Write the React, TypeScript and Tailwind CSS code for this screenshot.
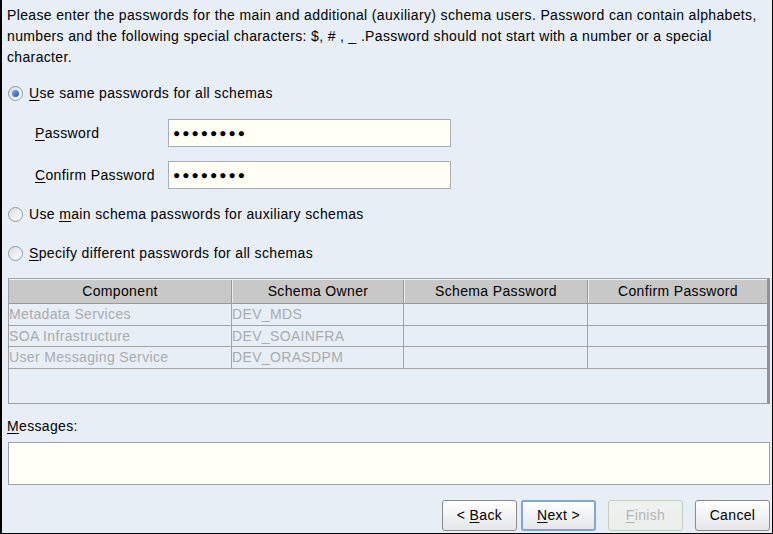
import React from "react";

const U = ({ children }: { children: React.ReactNode }) => <span className="underline underline-offset-2">{children}</span>;

function Radio({ checked }: { checked?: boolean }) {
  return (
    <span className="relative inline-flex items-center justify-center w-[15px] h-[15px] rounded-full border border-[#8e99a4] bg-gradient-to-br from-[#d9dde2] to-white shrink-0">
      {checked && <span className="w-[7px] h-[7px] rounded-full bg-gradient-to-br from-[#7fa6e8] to-[#2457b8]" />}
    </span>
  );
}

function Btn({ children, variant }: { children: React.ReactNode; variant?: "focus" | "disabled" }) {
  const base = "h-[31px] w-[75px] rounded-[3px] flex items-center justify-center bg-gradient-to-b";
  const cls =
    variant === "focus"
      ? "border-2 border-[#7ea6d8] text-black from-white to-[#e4e6ea]"
      : variant === "disabled"
      ? "border border-[#c4ccc4] text-[#b4b4b4] from-[#f0f2f0] to-[#eaeeea]"
      : "border border-[#8a8a8a] text-black from-white to-[#e4e6ea]";
  return (
    <div className={`${base} ${cls}`}>
      <span className="whitespace-pre">{children}</span>
    </div>
  );
}

export default function App() {
  const rows = [
    ["Metadata Services", "DEV_MDS"],
    ["SOA Infrastructure", "DEV_SOAINFRA"],
    ["User Messaging Service", "DEV_ORASDPM"],
  ];
  return (
    <div
      className="w-[773px] h-[534px] bg-[#e8eef6] border-l-2 border-r border-b border-black flex flex-col text-[14px] tracking-[0.35px] text-black overflow-hidden"
      style={{ fontFamily: '"Liberation Sans", Arial, sans-serif' }}
    >
      <div className="pl-[5px] pr-[2px] pt-[5px] leading-[21px]">
        Please enter the passwords for the main and additional (auxiliary) schema users. Password can contain alphabets, numbers and the following special characters: $, # , _ .Password should not start with a number or a special character.
      </div>

      <div className="flex items-center gap-[6px] mt-[15px] pl-[6px] h-[20px]">
        <Radio checked />
        <span><U>U</U>se same passwords for all schemas</span>
      </div>

      <div className="flex items-center mt-[16px] pl-[33px]">
        <span className="w-[133px]"><U>P</U>assword</span>
        <div className="w-[283px] h-[28px] bg-[#fffff5] border border-[#a7adb3] flex items-center pl-[4px] text-[12px] tracking-[2px]">●●●●●●●●</div>
      </div>
      <div className="flex items-center mt-[14px] pl-[33px]">
        <span className="w-[133px]"><U>C</U>onfirm Password</span>
        <div className="w-[283px] h-[28px] bg-[#fffff5] border border-[#a7adb3] flex items-center pl-[4px] text-[12px] tracking-[2px]">●●●●●●●●</div>
      </div>

      <div className="flex items-center gap-[6px] mt-[15px] pl-[6px] h-[20px]">
        <Radio />
        <span>Use <U>m</U>ain schema passwords for auxiliary schemas</span>
      </div>
      <div className="flex items-center gap-[6px] mt-[19px] pl-[6px] h-[20px]">
        <Radio />
        <span><U>S</U>pecify different passwords for all schemas</span>
      </div>

      <div className="ml-[6px] mr-[2px] mt-[15px] h-[126px] border border-[#9aa0a6] border-r-[3px] border-r-[#8e9499] flex flex-col">
        <div className="grid grid-cols-[223px_172px_184px_1fr] h-[25px] bg-[#c8c8c8] border-t border-t-[#f4f4f0] border-b border-b-[#9a9a9a]">
          {["Component", "Schema Owner", "Schema Password", "Confirm Password"].map((h, i) => (
            <div key={h} className={`flex items-center justify-center ${i < 3 ? "border-r border-r-[#9a9a9a]" : ""} ${i > 0 ? "border-l border-l-[#ececec]" : ""}`}>{h}</div>
          ))}
        </div>
        {rows.map((r, idx) => (
          <div key={r[0]} className={`grid grid-cols-[223px_172px_184px_1fr] ${idx === 1 ? "h-[21px]" : "h-[22px]"} border-b border-b-[#a4a4a4] text-[#a9acae]`}>
            <div className="border-r border-r-[#a4a4a4] flex items-center">{r[0]}</div>
            <div className="border-r border-r-[#a4a4a4] flex items-center">{r[1]}</div>
            <div className="border-r border-r-[#a4a4a4]" />
            <div />
          </div>
        ))}
      </div>

      <div className="pl-[5px] mt-[12px] h-[20px] flex items-center"><U>M</U>essages:</div>
      <div className="ml-[6px] mr-[2px] mt-[6px] h-[43px] bg-[#fffff5] border border-[#9aa0a6]" />

      <div className="flex justify-end items-center gap-[4px] mt-[15px] pr-[2px]">
        <Btn>&lt; <U>B</U>ack</Btn>
        <Btn variant="focus"><U>N</U>ext &gt;</Btn>
        <div className="w-[4px]" />
        <Btn variant="disabled"><U>F</U>inish</Btn>
        <div className="w-[4px]" />
        <Btn>Cancel</Btn>
      </div>
    </div>
  );
}
